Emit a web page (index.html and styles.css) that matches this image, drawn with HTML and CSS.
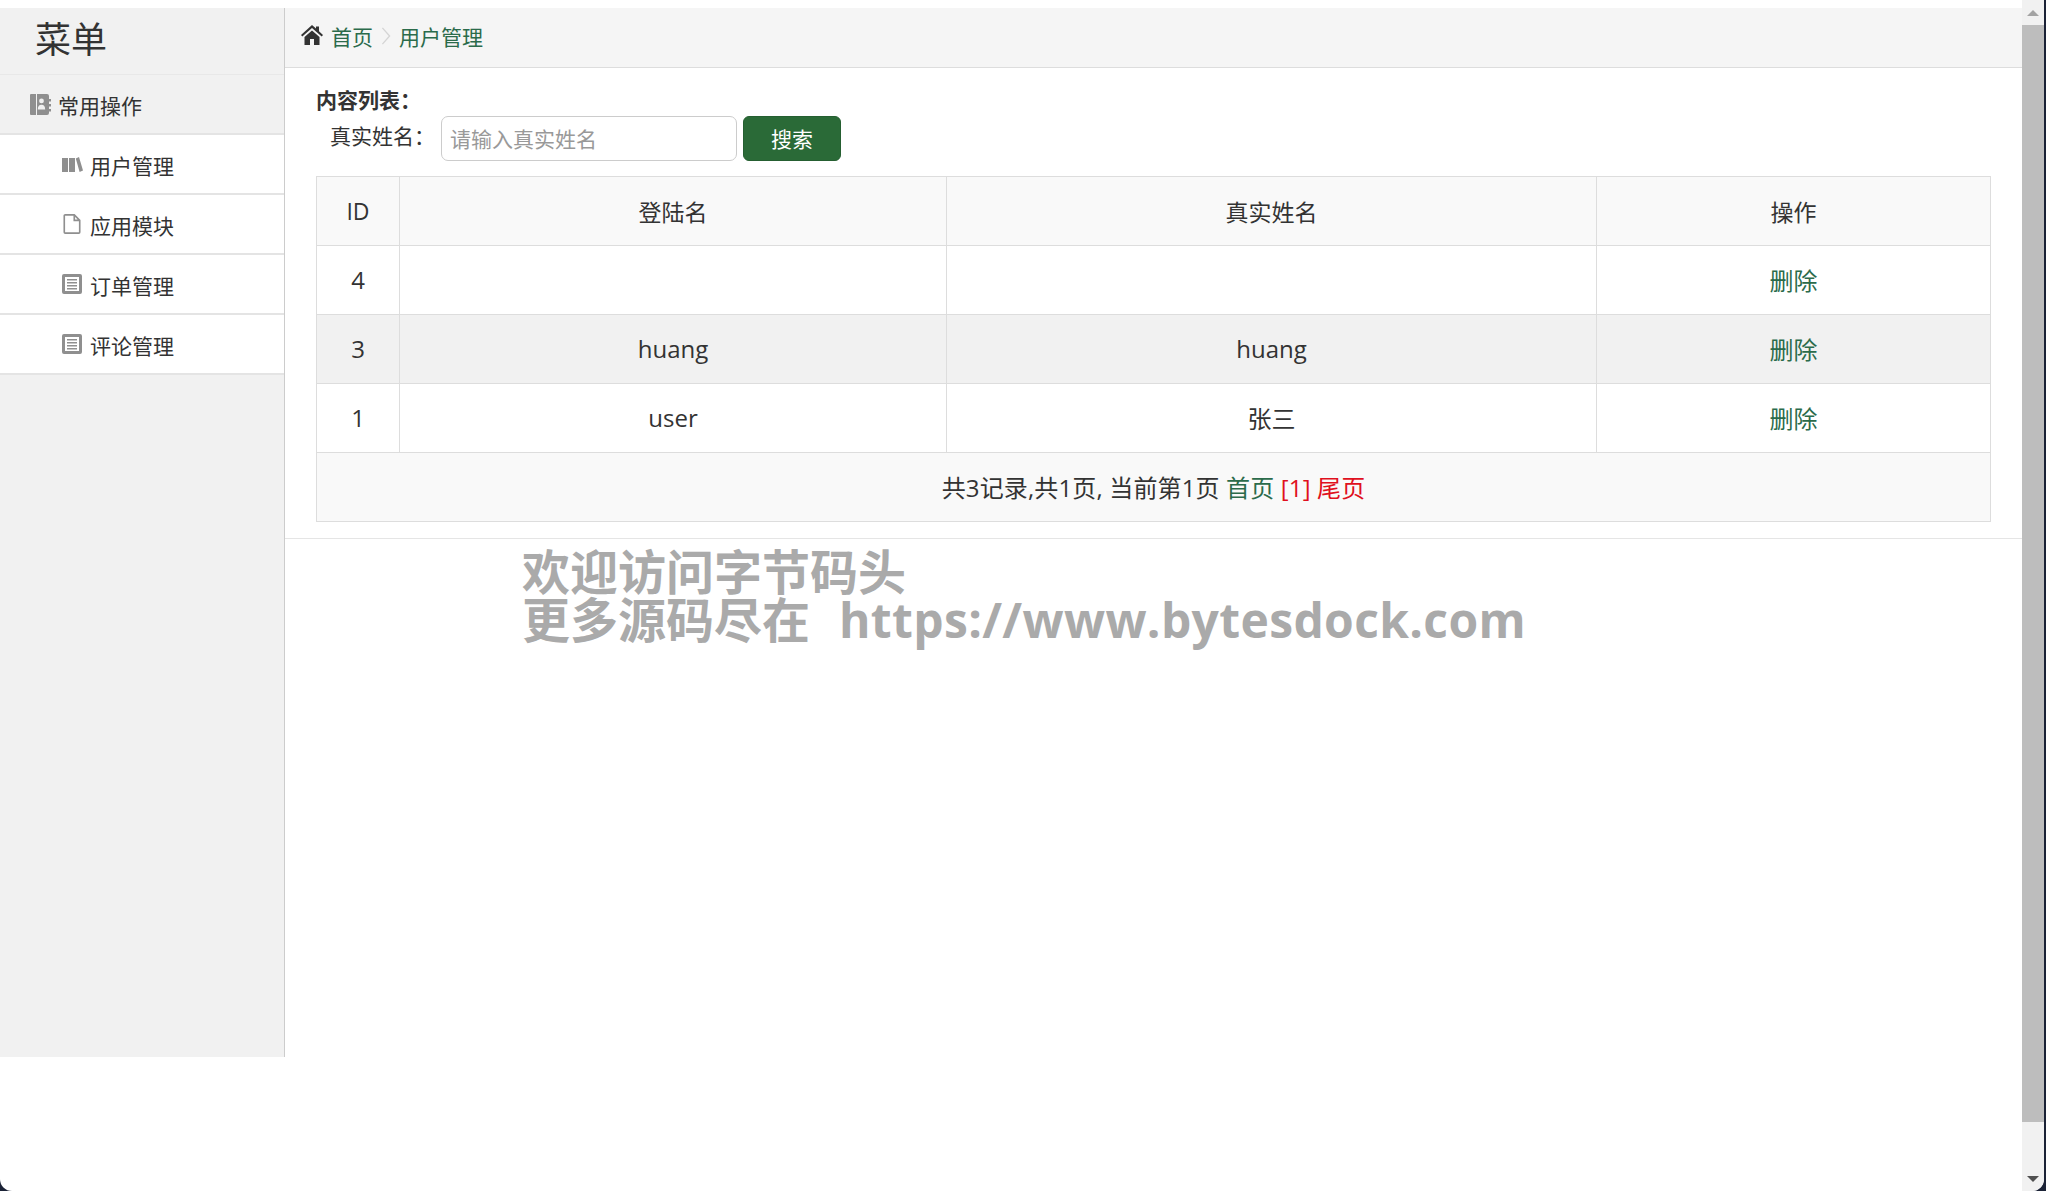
FILE: index.html
```html
<!DOCTYPE html>
<html lang="en">
<head>
  <meta charset="UTF-8" />
  <title>用户管理</title>
  <link rel="stylesheet" href="styles.css">
</head>
<body>
  <div class="window">
    <div class="page">
      <div class="layout">
        <aside class="sidebar">
          <div class="sidebar-title">菜单</div>
          <div class="menu-group">
            <svg class="icon group-icon" viewBox="0 0 21 21"><path d="M1 0h5v21H1a1 1 0 0 1-1-1V1a1 1 0 0 1 1-1zM7 0h10a2 2 0 0 1 2 2v3h2v2.500h-2v2.500h2v2.500h-2V15h2v2.500h-2V19a2 2 0 0 1-2 2H7zm4.500 4.500a2.400 2.400 0 1 0 0 4.800 2.400 2.400 0 0 0 0-4.800zM7.800 15.500h7.400c0-3-1.200-4.800-3.700-4.800s-3.700 1.800-3.700 4.800z" fill-rule="evenodd"/></svg>
            <span>常用操作</span>
          </div>
          <a class="menu-item books-item" href="#">
            <svg class="icon books-icon" viewBox="0 0 21 15"><path d="M0 1h6v14H0zM7 1h6v14H7zM13.800 1.500L17 0l4 13.500-3.400 1.500z"/></svg>
            <span>用户管理</span>
          </a>
          <a class="menu-item" href="#">
            <svg class="icon" viewBox="0 0 20 22"><path d="M2.500 1h10L18.500 7v13a1 1 0 0 1-1 1h-15a1 1 0 0 1-1-1V2a1 1 0 0 1 1-1zM12.500 1v6h6" fill="none" stroke="#8f8f8f" stroke-width="1.800"/></svg>
            <span>应用模块</span>
          </a>
          <a class="menu-item" href="#">
            <svg class="icon" viewBox="0 0 20 20"><path d="M2 0h16a2 2 0 0 1 2 2v16a2 2 0 0 1-2 2H2a2 2 0 0 1-2-2V2a2 2 0 0 1 2-2zm1 3v14h14V3zm2 2h10v1.500H5zm0 3h10v1.500H5zm0 3h10v1.500H5zm0 3h10v1.500H5z" fill-rule="evenodd"/></svg>
            <span>订单管理</span>
          </a>
          <a class="menu-item" href="#">
            <svg class="icon" viewBox="0 0 20 20"><path d="M2 0h16a2 2 0 0 1 2 2v16a2 2 0 0 1-2 2H2a2 2 0 0 1-2-2V2a2 2 0 0 1 2-2zm1 3v14h14V3zm2 2h10v1.500H5zm0 3h10v1.500H5zm0 3h10v1.500H5zm0 3h10v1.500H5z" fill-rule="evenodd"/></svg>
            <span>评论管理</span>
          </a>
        </aside>

        <main class="main">
          <div class="breadcrumb">
            <svg class="home-icon" viewBox="0 0 22 20"><path d="M11 0l4 3.600V1.500h3v4.800L22 10l-1.300 1.500L11 3 1.300 11.500 0 10zM3.500 12L11 5.400l7.500 6.600v8h-5.500v-6H9v6H3.500z"/></svg>
            <a href="#">首页</a>
            <svg class="crumb-sep" viewBox="0 0 10 20"><path d="M1 1l8 9-8 9" fill="none" stroke="#d5d5d5" stroke-width="1.500"/></svg>
            <a href="#">用户管理</a>
          </div>

          <section class="content">
            <div class="content-title">内容列表：</div>
            <form class="filter">
              <label class="filter-label">真实姓名：</label>
              <input class="filter-input" type="text" placeholder="请输入真实姓名">
              <button class="filter-btn" type="button">搜索</button>
            </form>

            <table class="list">
              <colgroup>
                <col class="col-id"><col class="col-login"><col class="col-name"><col class="col-op">
              </colgroup>
              <thead>
                <tr><th>ID</th><th>登陆名</th><th>真实姓名</th><th>操作</th></tr>
              </thead>
              <tbody>
                <tr><td>4</td><td></td><td></td><td><a href="#">删除</a></td></tr>
                <tr class="striped"><td>3</td><td>huang</td><td>huang</td><td><a href="#">删除</a></td></tr>
                <tr><td>1</td><td>user</td><td>张三</td><td><a href="#">删除</a></td></tr>
              </tbody>
              <tfoot>
                <tr>
                  <td colspan="4">共3记录,共1页, 当前第1页 <a href="#">首页</a> <span class="pager-red">[1] 尾页</span></td>
                </tr>
              </tfoot>
            </table>
          </section>

          <div class="watermark">
            <div>欢迎访问字节码头</div>
            <div>更多源码尽在&nbsp;&nbsp;<span class="watermark-url">https://www.bytesdock.com</span></div>
          </div>
        </main>
      </div>
    </div>

    <div class="scrollbar">
      <div class="scroll-btn"><span class="arrow-up"></span></div>
      <div class="scroll-thumb"></div>
      <div class="scroll-track"></div>
      <div class="scroll-btn"><span class="arrow-down"></span></div>
    </div>
  </div>
</body>
</html>
```

FILE: styles.css
```css
html, body {
  margin: 0;
  padding: 0;
  height: 100%;
  overflow: hidden;
}
body {
  background: #1b2236;
  font-family: "Open Sans", "Noto Sans CJK SC", sans-serif;
  color: #333;
}
a {
  color: #2b6b4b;
  text-decoration: none;
}
.window {
  display: flex;
  width: 2044px;
  height: 1191px;
  background: #fff;
  border-radius: 0 0 12px 12px;
  overflow: hidden;
}
.page {
  flex: 1;
  padding-top: 8px;
}
.layout {
  display: flex;
  align-items: flex-start;
}

/* sidebar */
.sidebar {
  width: 284px;
  height: 1049px;
  background: #f1f1f1;
  border-right: 1px solid #ccc;
  flex-shrink: 0;
}
.sidebar-title {
  height: 66px;
  line-height: 64px;
  padding-left: 35px;
  font-size: 36px;
  border-bottom: 1px solid #e8e8e8;
}
.menu-group,
.menu-item {
  display: flex;
  align-items: center;
  height: 56px;
  padding-top: 2px;
  font-size: 21px;
  border-bottom: 2px solid #e4e4e4;
}
.menu-group {
  padding-left: 30px;
  gap: 7px;
}
.menu-item {
  padding-left: 62px;
  gap: 8px;
  background: #fff;
  color: #333;
}
.books-item {
  gap: 7px;
}
.icon {
  width: 20px;
  height: 20px;
  fill: #8f8f8f;
  margin-top: -2px;
}
.group-icon {
  width: 21px;
  height: 21px;
}
.books-icon {
  width: 21px;
  height: 15px;
}

/* main area */
.main {
  flex: 1;
  min-width: 0;
}
.breadcrumb {
  display: flex;
  align-items: center;
  height: 56px;
  padding: 0 0 3px 16px;
  background: #f5f5f5;
  border-bottom: 1px solid #ddd;
  font-size: 21px;
}
.home-icon {
  width: 22px;
  height: 20px;
  fill: #333;
  margin-right: 8px;
  margin-top: -2px;
}
.crumb-sep {
  width: 10px;
  height: 18px;
  margin: 0 8px;
}
.content {
  padding: 16px 30px 16px 31px;
  border-bottom: 1px solid #e5e5e5;
}
.content-title {
  font-size: 21px;
  font-weight: bold;
  line-height: 32px;
  height: 32px;
}
.filter {
  display: flex;
  align-items: center;
  height: 45px;
}
.filter-label {
  font-size: 21px;
  padding-left: 14px;
  width: 125px;
  box-sizing: border-box;
  margin-top: -8px;
}
.filter-input {
  width: 296px;
  height: 45px;
  box-sizing: border-box;
  padding: 0 8px;
  border: 1px solid #ccc;
  border-radius: 7px;
  font-family: inherit;
  font-size: 21px;
  color: #333;
}
.filter-input::placeholder {
  color: #999;
}
.filter-btn {
  width: 98px;
  height: 45px;
  margin-left: 6px;
  padding: 0 0 2px;
  background: #2a6a37;
  border: 1px solid #255f31;
  border-radius: 6px;
  color: #fff;
  font-family: inherit;
  font-size: 21px;
}
.list {
  width: 1675px;
  margin-top: 15px;
  border-collapse: collapse;
  table-layout: fixed;
  font-size: 24px;
}
.col-id { width: 83px; }
.col-login { width: 547px; }
.col-name { width: 650px; }
.list th,
.list td {
  height: 68px;
  padding: 0;
  border: 1px solid #ddd;
  text-align: center;
  font-weight: normal;
}
.list td {
  padding-bottom: 2px;
  height: 66px;
}
.list th {
  font-size: 23px;
}
.list tfoot td {
  letter-spacing: 0.15px;
}
.list thead tr,
.list tfoot tr {
  background: #f9f9f9;
}
.striped {
  background: #f1f1f1;
}
.pager-red {
  color: #e01020;
}

/* watermark */
.watermark {
  padding-left: 237px;
  padding-top: 9px;
  font-size: 48px;
  line-height: 48px;
  font-weight: bold;
  color: #aaa;
  white-space: nowrap;
}
.watermark-url {
  margin-left: 4px;
  letter-spacing: 0.35px;
}

/* scrollbar */
.scrollbar {
  display: flex;
  flex-direction: column;
  width: 22px;
  background: #f1f1f1;
  flex-shrink: 0;
}
.scroll-btn {
  display: flex;
  align-items: center;
  justify-content: center;
  height: 25px;
  flex-shrink: 0;
}
.scroll-thumb {
  height: 1097px;
  background: #bdbdbd;
}
.scroll-track {
  flex: 1;
}
.arrow-up {
  border: 6px solid transparent;
  border-top: 0;
  border-bottom: 6px solid #a3a3a3;
}
.arrow-down {
  border: 6px solid transparent;
  border-bottom: 0;
  border-top: 6px solid #505050;
}
```
